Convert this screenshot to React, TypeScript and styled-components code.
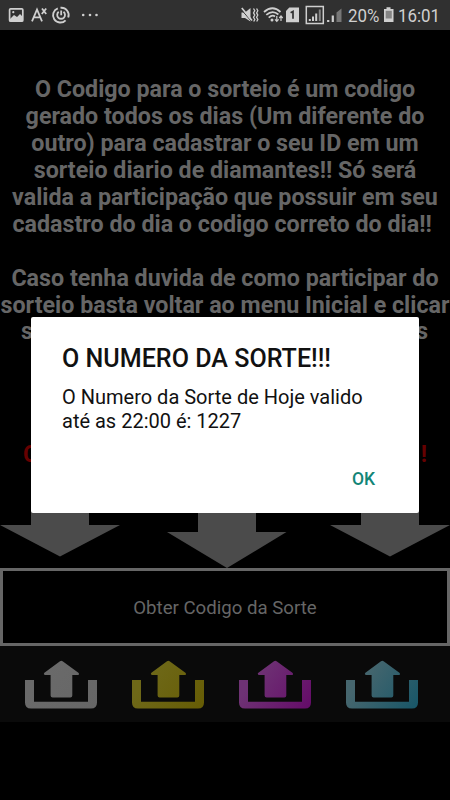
import React from "react";
import styled, { createGlobalStyle } from "styled-components";

const Global = createGlobalStyle`
  * { box-sizing: border-box; }
  body { margin: 0; background: #000; font-family: Roboto, sans-serif; }
`;

const Screen = styled.div`
  position: relative;
  width: 450px;
  height: 800px;
  overflow: hidden;
  background: #000;
  display: flex;
  flex-direction: column;
`;

const StatusBar = styled.header`
  height: 30px;
  flex: none;
  background: #303030;
  display: flex;
  justify-content: space-between;
  color: #cfcfcf;
`;

const StatusGroup = styled.div`
  display: flex;
`;

const StatusText = styled.span<{ $width: number }>`
  width: ${(p) => p.$width}px;
  font-size: 19px;
  line-height: 31px;
  white-space: nowrap;
  transform: scaleX(0.89);
  transform-origin: left;
`;

const Info = styled.section`
  height: 538px;
  flex: none;
  padding-top: 46px;
  display: flex;
  flex-direction: column;
`;

const Paragraph = styled.p<{ $gap?: number }>`
  margin: 0 -10px;
  padding-bottom: ${(p) => p.$gap ?? 0}px;
  text-align: center;
  white-space: pre;
  font-size: 23.26px;
  font-weight: 700;
  line-height: 26.95px;
  color: #666;
`;

const EdgeLine = styled.div<{ $red?: boolean }>`
  display: flex;
  justify-content: space-between;
  padding: ${(p) => (p.$red ? "0 23px" : "0 22px 0 21px")};
  margin-top: ${(p) => (p.$red ? 96 : -1)}px;
  font-size: 23px;
  font-weight: 700;
  line-height: 27px;
  color: ${(p) => (p.$red ? "#660000" : "#666")};
`;

const Arrows = styled.svg`
  display: block;
  margin-top: auto;
  flex: none;
`;

const CodeButton = styled.button`
  height: 78px;
  flex: none;
  margin: 0;
  padding: 2px 0 0;
  border: 3px solid #666;
  background: #000;
  color: #666;
  font-family: inherit;
  font-size: 18.65px;
  line-height: 22px;
`;

const Tray = styled.nav`
  height: 76px;
  flex: none;
  background: #0a0a0a;
  display: grid;
  grid-template-columns: repeat(4, 107.1px);
  padding: 14px 0 0 25px;
`;

const Dialog = styled.div`
  position: absolute;
  left: 31px;
  top: 317px;
  width: 388px;
  height: 196px;
  border-radius: 2px;
  background: #fff;
  padding: 27px 31px 0;
  display: flex;
  flex-direction: column;
`;

const Title = styled.h1`
  margin: 0;
  font-size: 25.1px;
  font-weight: 500;
  line-height: 30px;
  color: #111;
  white-space: nowrap;
`;

const Message = styled.p`
  margin: 11px 0 0;
  font-size: 20px;
  line-height: 24px;
  color: #111;
  white-space: pre;
`;

const OkButton = styled.button`
  align-self: flex-end;
  margin: 35px 13px 0 0;
  padding: 0;
  border: 0;
  background: none;
  font-family: inherit;
  font-size: 17.5px;
  font-weight: 500;
  line-height: 22px;
  color: #128577;
`;

const trayColors = [
  { id: "white", from: "#6a6a6a", to: "#666666" },
  { id: "yellow", from: "#6e6818", to: "#665c04" },
  { id: "purple", from: "#6e3274", to: "#640a68" },
  { id: "cyan", from: "#46666e", to: "#165668" },
];

function UploadIcon({ id, from, to }: { id: string; from: string; to: string }) {
  return (
    <svg width="73" height="50" viewBox="0 0 73 50">
      <defs>
        <linearGradient id={id} x1="0" y1="0" x2="73" y2="50" gradientUnits="userSpaceOnUse">
          <stop offset=".25" stopColor={from} />
          <stop offset="1" stopColor={to} />
        </linearGradient>
      </defs>
      <path
        fill={`url(#${id})`}
        d="M0 20H9V41.7H63V20H72V42.5Q72 48.5 66 48.5H6Q0 48.5 0 42.5Z M35 1.2Q36.3 .1 37.6 1.2L53.4 12.7Q54.8 14 53.4 15H47.3V35.5Q47.3 37.5 45.3 37.5H27.6Q25.6 37.5 25.6 35.5V15H19.8Q18 14 19.4 12.7Z"
      />
    </svg>
  );
}

function LeftIcons() {
  return (
    <svg width="105" height="30" viewBox="0 0 105 30" fill="none" stroke="#cfcfcf">
      <rect x="9.6" y="8.8" width="13.2" height="12.4" strokeWidth="1.7" rx="1" />
      <path d="M10 19l4-4 3 2 3-3 3 3v4H10z" fill="#cfcfcf" stroke="none" />
      <circle cx="13.3" cy="12.2" r="1.1" fill="#cfcfcf" stroke="none" />
      <path d="M32 21.3L37 9.5 42 21.3M33.7 17.3H40.3M42 8.5l4.2 5.5M46.2 8.5L41.8 14" strokeWidth="1.8" />
      <path d="M57.8 8.4A7.3 7.3 0 1 0 65.6 20.3M68.2 17.5A7.3 7.3 0 0 0 60.5 7.8" strokeWidth="1.9" />
      <path d="M58.7 11.8A3.9 3.9 0 1 0 63.5 11.8M61.2 10.5V15.2" strokeWidth="1.8" />
      <g fill="#cfcfcf" stroke="none">
        <circle cx="83.2" cy="15" r="1.3" />
        <circle cx="90" cy="15" r="1.3" />
        <circle cx="96.5" cy="15" r="1.3" />
      </g>
    </svg>
  );
}

function SignalIcons() {
  return (
    <svg width="108" height="30" viewBox="240 0 108 30" fill="none" stroke="#cfcfcf">
      <path d="M241.5 12.5H245L250.5 8V21.5L245 18H241.5Z" fill="#cfcfcf" stroke="none" />
      <path d="M241 9.2L251.5 21.5" stroke="#303030" strokeWidth="1" />
      <path d="M241.8 8L252 20.5" strokeWidth="1.7" />
      <path d="M253.5 8.5l1.3 2.2-1.3 2.2 1.3 2.2-1.3 2.2 1.3 2.2-1.1 2M256.6 8.5l1.2 2.2-1.2 2.2 1.2 2.2-1.2 2.2 1.2 2.2-1.1 2" strokeWidth="1.3" />
      <path d="M264 12Q272.5 4.6 280.5 12M266.3 14.9Q272.5 9.6 278.4 14.5M268.7 17.6Q272.4 14.4 275 16.5" strokeWidth="1.8" />
      <circle cx="272" cy="20" r="1.5" fill="#cfcfcf" stroke="none" />
      <path d="M276.8 16V21M275 19.3l1.8 2 1.8-2M281 21V16M279.3 18l1.7-2 1.7 2" strokeWidth="1.2" />
      <path d="M286 11L289.3 7.5H299V22.3H286Z" fill="#cfcfcf" stroke="none" />
      <path d="M290.6 12.8L293 11.5V18.7" stroke="#303030" strokeWidth="1.7" />
      <rect x="306.3" y="6.5" width="17" height="17" strokeWidth="1.5" />
      <path d="M309.8 21V19M313 21V16.5M316.2 21V13.5" strokeWidth="2" />
      <path d="M319.8 21V9.5" stroke="#858585" strokeWidth="2" />
      <path d="M328.2 22V20M332.8 22V15.5" strokeWidth="2.2" />
      <path d="M336.5 22V12.5L341.5 8.5V22Z" fill="#777" stroke="none" />
    </svg>
  );
}

function BatteryIcon() {
  return (
    <svg width="16" height="30" viewBox="0 0 16 30">
      <path d="M2 9H4.5V7.2H8.5V9H11.5V22H2Z" fill="#cfcfcf" />
      <path d="M3.7 10.8H9.8V18.5H3.7Z" fill="#858585" />
    </svg>
  );
}

export default function App() {
  return (
    <>
      <Global />
      <Screen>
        <StatusBar>
          <StatusGroup>
            <LeftIcons />
          </StatusGroup>
          <StatusGroup>
            <SignalIcons />
            <StatusText $width={34}>20%</StatusText>
            <BatteryIcon />
            <StatusText $width={52}>16:01</StatusText>
          </StatusGroup>
        </StatusBar>
        <Info>
          <Paragraph $gap={27}>
            {"O Codigo para o sorteio é um codigo\ngerado todos os dias (Um diferente do\noutro) para cadastrar o seu ID em um\nsorteio diario de diamantes!! Só será\nvalida a participação que possuir em seu\ncadastro do dia o codigo correto do dia!! "}
          </Paragraph>
          <Paragraph>
            {"Caso tenha duvida de como participar do\nsorteio basta voltar ao menu Inicial e clicar"}
          </Paragraph>
          <EdgeLine>
            <span>s</span>
            <span>s</span>
          </EdgeLine>
          <EdgeLine $red>
            <span>C</span>
            <span>!</span>
          </EdgeLine>
          <Arrows width="450" height="58" viewBox="0 510 450 58">
            <g fill="#4b4b4b">
              <path d="M31 510H89V525H120L60 556.5L0 525H31Z" />
              <path d="M198 510H256V532H286.5L227 568L167 532H198Z" />
              <path d="M361 510H419V525H450L390 556.5L330 525H361Z" />
            </g>
          </Arrows>
        </Info>
        <CodeButton>Obter Codigo da Sorte</CodeButton>
        <Tray>
          {trayColors.map((c) => (
            <UploadIcon key={c.id} {...c} />
          ))}
        </Tray>
        <Dialog role="dialog">
          <Title>O NUMERO DA SORTE!!!</Title>
          <Message>{"O Numero da Sorte de Hoje valido\naté as 22:00 é: 1227"}</Message>
          <OkButton>OK</OkButton>
        </Dialog>
      </Screen>
    </>
  );
}
